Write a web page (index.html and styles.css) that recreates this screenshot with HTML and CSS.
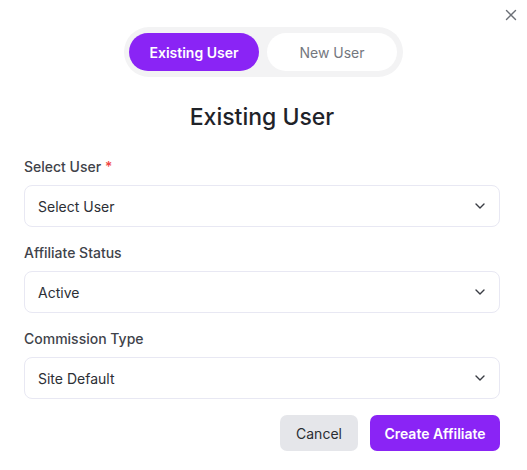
FILE: index.html
```html
<!DOCTYPE html>
<html>
<head>
<meta charset="utf-8">
<link rel="stylesheet" href="styles.css">
</head>
<body>
<div class="modal">
  <button class="close" aria-label="Close">
    <svg width="12" height="12" viewBox="0 0 12 12"><path d="M1.5 1.5L10.5 10.5M10.5 1.5L1.5 10.5" stroke="#6b6f76" stroke-width="1.4" stroke-linecap="round"/></svg>
  </button>
  <div class="toggle-wrap">
    <div class="toggle">
      <button class="tab active">Existing User</button>
      <button class="tab">New User</button>
    </div>
  </div>
  <h2 class="title">Existing User</h2>
  <div class="field">
    <label class="label">Select User <span class="req">*</span></label>
    <div class="select"><span>Select User</span><svg class="chev" width="10" height="6" viewBox="0 0 10 6"><path d="M1 1l4 4 4-4" fill="none" stroke="#3a3d44" stroke-width="1.4" stroke-linecap="round" stroke-linejoin="round"/></svg></div>
  </div>
  <div class="field">
    <label class="label">Affiliate Status</label>
    <div class="select"><span>Active</span><svg class="chev" width="10" height="6" viewBox="0 0 10 6"><path d="M1 1l4 4 4-4" fill="none" stroke="#3a3d44" stroke-width="1.4" stroke-linecap="round" stroke-linejoin="round"/></svg></div>
  </div>
  <div class="field">
    <label class="label">Commission Type</label>
    <div class="select"><span>Site Default</span><svg class="chev" width="10" height="6" viewBox="0 0 10 6"><path d="M1 1l4 4 4-4" fill="none" stroke="#3a3d44" stroke-width="1.4" stroke-linecap="round" stroke-linejoin="round"/></svg></div>
  </div>
  <div class="actions">
    <button class="btn cancel">Cancel</button>
    <button class="btn primary">Create Affiliate</button>
  </div>
</div>
</body>
</html>
```
FILE: styles.css
```css
* { box-sizing: border-box; }
html, body { margin: 0; padding: 0; background: #fff; }
body { font-family: Inter, "Noto Sans", sans-serif; color: #1f2329; }
.modal { position: relative; width: 527px; height: 470px; padding: 27px 27px 0 24px; }
.close { position: absolute; top: 9px; right: 10px; width: 12px; height: 12px; padding: 0; border: 0; background: none; display: flex; }
.toggle-wrap { display: flex; justify-content: center; padding-left: 3px; }
.toggle { display: flex; gap: 8px; background: #f3f3f4; border-radius: 25px; padding: 6px 5px; width: 279px; height: 50px; }
.tab { width: 130px; height: 38px; border: 0; border-radius: 19px; font-family: inherit; font-size: 14px; font-weight: 400; background: #fff; color: #74777e; }
.tab.active { background: #8a24f5; color: #fff; font-weight: 600; }
.title { margin: 26px 0 27px; text-align: center; font-size: 23px; font-weight: 500; color: #1f2329; line-height: 28px; }
.field { display: flex; flex-direction: column; gap: 9px; margin-bottom: 17px; }
.label { font-size: 14px; font-weight: 500; color: #3f434a; line-height: 18px; }
.req { color: #ef4444; }
.select { height: 42px; border: 1px solid #e8e8f3; border-radius: 8px; display: flex; align-items: center; justify-content: space-between; padding: 0 14px 0 13px; font-size: 14px; color: #2c2f35; }
.actions { display: flex; justify-content: flex-end; gap: 12px; margin-top: -1px; }
.btn { height: 36px; border: 0; border-radius: 7px; font-family: inherit; font-size: 14px; font-weight: 500; padding: 0; white-space: nowrap; }
.cancel { width: 78px; background: #e5e6ea; color: #2a2d33; font-weight: 400; }
.primary { width: 130px; background: #8a24f5; color: #fff; font-weight: 600; }
```
